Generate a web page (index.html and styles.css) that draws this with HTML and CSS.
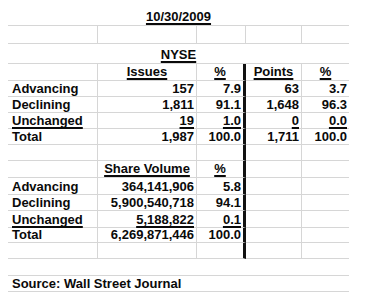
FILE: index.html
```html
<!DOCTYPE html>
<html lang="en">
<head>
<meta charset="utf-8">
<title>NYSE 10/30/2009</title>
<link rel="stylesheet" href="styles.css">
</head>
<body>
<div class="sheet">
  <div class="c span center"><span class="u">10/30/2009</span></div>

  <div class="c"></div><div class="c"></div><div class="c"></div><div class="c"></div><div class="c last"></div>

  <div class="c span center"><span class="u">NYSE</span></div>

  <div class="c"></div>
  <div class="c center"><span class="u">Issues</span></div>
  <div class="c center thick"><span class="u">%</span></div>
  <div class="c center"><span class="u">Points</span></div>
  <div class="c center last"><span class="u">%</span></div>

  <div class="c label">Advancing</div>
  <div class="c num">157</div>
  <div class="c num thick">7.9</div>
  <div class="c num">63</div>
  <div class="c num last">3.7</div>

  <div class="c label">Declining</div>
  <div class="c num">1,811</div>
  <div class="c num thick">91.1</div>
  <div class="c num">1,648</div>
  <div class="c num last">96.3</div>

  <div class="c label"><span class="u">Unchanged</span></div>
  <div class="c num"><span class="u">19</span></div>
  <div class="c num thick"><span class="u">1.0</span></div>
  <div class="c num"><span class="u">0</span></div>
  <div class="c num last"><span class="u">0.0</span></div>

  <div class="c label">Total</div>
  <div class="c num">1,987</div>
  <div class="c num thick">100.0</div>
  <div class="c num">1,711</div>
  <div class="c num last">100.0</div>

  <div class="c"></div><div class="c"></div><div class="c thick"></div><div class="c"></div><div class="c last"></div>

  <div class="c"></div>
  <div class="c center"><span class="u">Share Volume</span></div>
  <div class="c center thick"><span class="u">%</span></div>
  <div class="c"></div>
  <div class="c last"></div>

  <div class="c label">Advancing</div>
  <div class="c num">364,141,906</div>
  <div class="c num thick">5.8</div>
  <div class="c"></div>
  <div class="c last"></div>

  <div class="c label">Declining</div>
  <div class="c num">5,900,540,718</div>
  <div class="c num thick">94.1</div>
  <div class="c"></div>
  <div class="c last"></div>

  <div class="c label"><span class="u">Unchanged</span></div>
  <div class="c num"><span class="u">5,188,822</span></div>
  <div class="c num thick"><span class="u">0.1</span></div>
  <div class="c"></div>
  <div class="c last"></div>

  <div class="c label">Total</div>
  <div class="c num">6,269,871,446</div>
  <div class="c num thick">100.0</div>
  <div class="c"></div>
  <div class="c last"></div>

  <div class="c"></div><div class="c"></div><div class="c thick"></div><div class="c"></div><div class="c last"></div>

  <div class="c span"></div>

  <div class="c span label">Source: Wall Street Journal</div>
</div>
</body>
</html>
```

FILE: styles.css
```css
html, body {
  margin: 0;
  padding: 0;
  background: #ffffff;
}

body {
  padding: 8px;
  font-family: "Liberation Sans", Arial, sans-serif;
  font-weight: bold;
  font-size: 13px;
  color: #0a0a0a;
}

.sheet {
  display: grid;
  width: 341px;
  grid-template-columns: 90px 99px 49px 56px 47px;
  grid-template-rows: 18px 18px 20px 17px 16px 16px 16px 16px 16px 17px 17px 16px 17px 15px 16px 17px 16px;
}

.c {
  box-sizing: border-box;
  display: flex;
  align-items: flex-end;
  line-height: 15px;
  white-space: nowrap;
  border-bottom: 1px solid #d6d6d6;
  border-right: 1px solid #d6d6d6;
  min-width: 0;
}

.last {
  border-right: none;
}

.span {
  grid-column: 1 / -1;
  border-right: none;
}

.thick {
  border-right: 3px solid #111111;
}

.center {
  justify-content: center;
  padding-bottom: 1px;
}

.num {
  justify-content: flex-end;
  padding-right: 2px;
}

.label {
  padding-left: 4px;
}

.u {
  text-decoration: underline;
  text-decoration-thickness: 2px;
  text-underline-offset: 2px;
  text-decoration-skip-ink: none;
}
```
